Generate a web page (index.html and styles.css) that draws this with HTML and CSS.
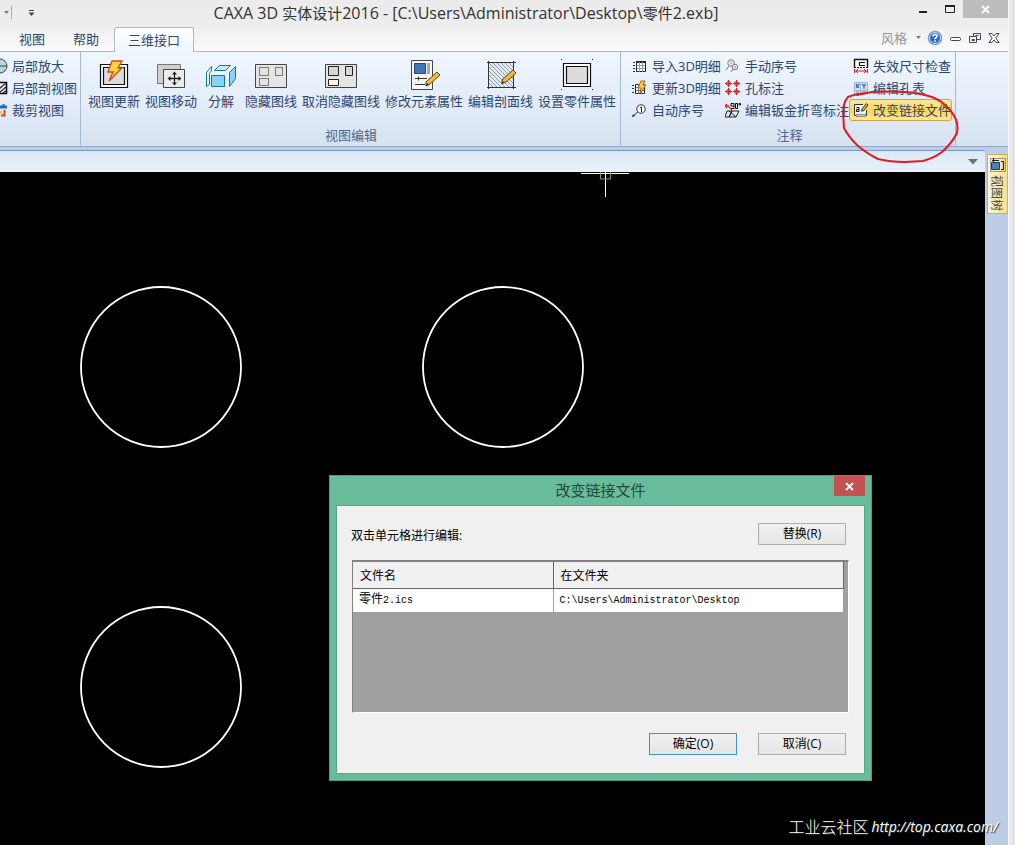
FILE: index.html
```html
<!DOCTYPE html>
<html lang="zh-CN">
<head>
<meta charset="utf-8">
<title>CAXA 3D 实体设计2016</title>
<link rel="stylesheet" href="styles.css">
</head>
<body>
<div class="frame">
<div class="app">
  <header class="titlebar">
    <div class="quick">
      <svg width="44" height="24" viewBox="0 0 44 24"><path d="M4 11h5l-2.500 3z" fill="#777"/><path d="M11.500 6v13" stroke="#aaa"/><path d="M29 10.500h5" stroke="#444"/><path d="M28.500 12.500h6l-3 3.500z" fill="#444"/></svg>
    </div>
    <h1 class="title">CAXA 3D <span class="zh">实体设计</span>2016 - [C:\Users\Administrator\Desktop\<span class="zh">零件</span>2.exb]</h1>
    <div class="winctl">
      <button class="wbtn" aria-label="最小化"><svg width="27" height="18"><path d="M10 12h8" stroke="#222" stroke-width="2"/></svg></button>
      <button class="wbtn" aria-label="最大化"><svg width="27" height="18"><path d="M9.500 5.500h9v7h-9z" fill="none" stroke="#222"/><path d="M9 6h10" stroke="#222" stroke-width="2"/></svg></button>
      <button class="wbtn wclose" aria-label="关闭"><svg width="45" height="18"><path d="M19 6l7 7M26 6l-7 7" stroke="#fff" stroke-width="1.800"/></svg></button>
    </div>
  </header>

  <nav class="tabs">
    <button class="tab">视图</button>
    <button class="tab">帮助</button>
    <button class="tab active">三维接口</button>
    <div class="tabtools">
      <button class="plain style">风格<svg width="7" height="6"><path d="M1 1h5l-2.500 3z" fill="#777"/></svg></button>
      <button class="plain" aria-label="帮助"><svg width="16" height="16"><circle cx="8" cy="8" r="6.800" fill="#2767c8" stroke="#7c9fd2"/><circle cx="8" cy="8" r="5.500" fill="none" stroke="#dce9fb"/><path d="M6 6.500q0-2 2-2t2 1.800q0 1-2 2.200v.8" fill="none" stroke="#fff" stroke-width="1.600"/><path d="M7.200 10.300h1.600v1.600H7.200z" fill="#fff"/></svg></button>
      <button class="plain" aria-label="最小化文档"><svg width="14" height="16"><rect x="1.500" y="7.500" width="10" height="3" rx="1" fill="#fff" stroke="#445"/></svg></button>
      <button class="plain" aria-label="还原文档"><svg width="14" height="16"><path d="M5.500 6V3.500h7v6H9M1.500 6.500h7v6h-7zM4 9.500h2.500v1H4zM7.500 5.500h3" fill="none" stroke="#445"/></svg></button>
      <button class="plain" aria-label="关闭文档"><svg width="14" height="16"><path d="M2 3.500h3l2 2.500 2-2.500h3L8.800 8l3.200 4.500H9L7 10l-2 2.500H2L5.200 8z" fill="#fff" stroke="#445"/></svg></button>
    </div>
  </nav>

  <section class="ribbon">
    <div class="group first">
      <div class="stack">
        <button class="row"><svg width="8" height="16"><circle cx="0" cy="8" r="7" fill="#b7d5e4" stroke="#444"/><path d="M0 8h7" stroke="#444"/></svg>局部放大</button>
        <button class="row"><svg width="8" height="16"><path d="M-1 2.500h7.500v11H-1z" fill="#f4f4ea" stroke="#000" stroke-width="1.500"/><path d="M-1 9l7-6M-1 13l7-6M3 13l4-3" stroke="#225" stroke-width="1.200"/></svg>局部剖视图</button>
        <button class="row"><svg width="8" height="16"><path d="M0 5h7" stroke="#246bb5" stroke-width="3"/><path d="M3.500 2v4" stroke="#246bb5" stroke-width="2"/><path d="M1 13.500h3.500V8" fill="none" stroke="#e0421c" stroke-width="2"/><path d="M0 9h2v3H0z" fill="#f9c22e"/></svg>裁剪视图</button>
      </div>
    </div>

    <div class="group edit">
      <div class="bigs">
        <button class="big"><svg width="32" height="32"><path d="M2.500 6.500h27v23h-27z" fill="#fff" stroke="#111" stroke-width="1.200"/><path d="M5.500 9.500h21v17h-21z" fill="#dcdcdc" stroke="#111" stroke-width="1.200"/><path d="M14 3h10l-4 7h4L11 23l4-9h-5z" fill="#ffd83e" stroke="#d4491a" stroke-width="1.400"/></svg>视图更新</button>
        <button class="big"><svg width="32" height="32"><path d="M2.500 6.500h23v19h-23z" fill="#d0d0d0" stroke="#777"/><path d="M8.500 11.500h21v18h-21z" fill="#ececec" stroke="#444"/><path d="M14 20.500h11M19.500 15v11" stroke="#222" stroke-width="1.300"/><path d="M19.500 13.500l-2.500 3h5zM19.500 27.500l-2.500-3h5zM12.500 20.500l3-2.500v5zM26.500 20.500l-3-2.500v5z" fill="#222"/></svg>视图移动</button>
        <button class="big"><svg width="32" height="32"><g stroke="#1673a5" stroke-linejoin="round"><path d="M14.500 7.500h11l-5 5h-11z" fill="#c6eafb"/><path d="M1.500 14.500l5-6v4l-2 3v11l-3 2z" fill="#e6f8ff"/><path d="M24.500 14.500l6-6v12l-6 8z" fill="#8fd4f4"/><path d="M6.500 17.500h13v11h-13z" fill="#86d2f5"/></g></svg>分解</button>
        <button class="big"><svg width="32" height="32"><path d="M.5 6.500h31v23H.5z" fill="#e4e4e4" stroke="#444"/><path d="M4.500 9.500h9v8h-9zM20.500 9.500h7v8h-7zM4.500 20.500h9v7h-9z" fill="none" stroke="#111" stroke-dasharray="1 1"/></svg>隐藏图线</button>
        <button class="big"><svg width="32" height="32"><path d="M.5 6.500h31v23H.5z" fill="#e4e4e4" stroke="#444"/><path d="M3.500 8.500h10v9h-10zM20.500 8.500h7v9h-7z" fill="#d6d6d6" stroke="#222"/><path d="M3.500 21.500h10v6h-10z" fill="#fff8dc" stroke="#222"/></svg>取消隐藏图线</button>
        <button class="big"><svg width="32" height="32"><path d="M3.500 2.500h21v29h-21z" fill="#f7f7f7" stroke="#444"/><path d="M6.500 5.500h11v10h-11z" fill="#3f74b5" stroke="#244b7c"/><path d="M20.500 5v11" stroke="#aaa" stroke-width="3"/><path d="M7 20.500h12M7 26.500h10M10.500 18.500v4" stroke="#333"/><path d="M18 24l11-10 3 3-10 9-4 2z" fill="#f5b933" stroke="#5f431c"/><path d="M18 28l1-3 2 2z" fill="#222"/></svg>修改元素属性</button>
        <button class="big"><svg width="32" height="32"><path d="M4 5h24v24H4z" fill="#e6ebf0"/><path d="M4 25l4 4M4 21l8 8M4 17l12 12M4 13l16 16M4 9l20 20M4 5l24 24M8 5l20 20M12 5l16 16M16 5l12 12M20 5l8 8M24 5l4 4" stroke="#8d98a3"/><path d="M2 4.500h29M2 29.500h29M3.500 3v28M28.500 3v28" stroke="#333"/><path d="M17 22l11-10 3 3-10 9-4 1z" fill="#f5b933" stroke="#5f431c"/><path d="M16.500 26l1-3 2 2z" fill="#222"/></svg>编辑剖面线</button>
        <button class="big"><svg width="32" height="32"><path d="M2.500 5.500h27v23h-27z" fill="#fff" stroke="#111" stroke-width="1.200"/><path d="M5.500 8.500h21v17h-21z" fill="#dcdcdc" stroke="#111" stroke-width="1.200"/><path d="M0 1h1v1H0zM31 1h1v1h-1zM0 31h1v1H0zM31 31h1v1h-1z" fill="#111"/></svg>设置零件属性</button>
      </div>
      <div class="caption">视图编辑</div>
    </div>

    <div class="group notes">
      <div class="cols">
        <div class="stack">
          <button class="row"><svg width="16" height="16"><path d="M4.500 3.500h9v10h-9z" fill="#fff" stroke="#222"/><path d="M4 4h10" stroke="#222" stroke-width="2"/><path d="M5 7.500h8M5 10.500h8M7.500 4v10M10.500 4v10" stroke="#999"/><path d="M1 4.500h2M1 7.500h2M1 10.500h2M1 13.500h2" stroke="#333"/></svg>导入3D明细</button>
          <button class="row"><svg width="16" height="16"><path d="M3.500 4.500h9v9h-9z" fill="#fff" stroke="#222"/><path d="M4 7.500h8M4 10.500h8M6.500 4v10M9.500 4v10" stroke="#777"/><path d="M0 5.500h2M0 8.500h2M0 12.500h2" stroke="#333"/><path d="M9 1h4l-2 4h3l-6 8 1-5H6z" fill="#ffd03a" stroke="#ad6416"/></svg>更新3D明细</button>
          <button class="row"><svg width="16" height="16"><circle cx="9" cy="7" r="4.200" fill="#fff" stroke="#333"/><path d="M8 6l1.500-1v5M5.500 10L1 14.500" fill="none" stroke="#222"/><path d="M0 15l1-3 2 2z" fill="#222"/></svg>自动序号</button>
        </div>
        <div class="stack">
          <button class="row"><svg width="16" height="16"><circle cx="6" cy="5" r="3.200" fill="#fff" stroke="#777"/><circle cx="10" cy="9" r="2.800" fill="#eee" stroke="#777"/><path d="M4 8l-3 4M6 3.500v3M10 8v2M8 11l-2 3" fill="none" stroke="#777"/></svg>手动序号</button>
          <button class="row"><svg width="16" height="16"><g fill="#fff" stroke="#c72323"><circle cx="3.500" cy="3.500" r="2"/><circle cx="11.500" cy="3.500" r="2"/><circle cx="3.500" cy="11.500" r="2"/><circle cx="11.500" cy="11.500" r="2"/><path d="M0 3.500h7M8 3.500h7M0 11.500h7M8 11.500h7M3.500 0v7M11.500 0v7M3.500 8v7M11.500 8v7"/></g></svg>孔标注</button>
          <button class="row"><svg width="16" height="16"><path d="M2 9h5l-3 6H0zM7 9h7l-3 6H4zM4 9l7 6" fill="none" stroke="#222"/><path d="M0 4h4M2 2L0 4l2 2M3 4q3 2 4 5" fill="none" stroke="#d62a1e" stroke-width="1.300"/><path d="M6 1.500h3v5H6M6 1.500v2.500h3M10.500 1.500h2v5h-2zM14 1.500h1.500V3H14z" fill="none" stroke="#111"/></svg>编辑钣金折弯标注</button>
        </div>
        <div class="stack">
          <button class="row"><svg width="16" height="16"><path d="M1.500 9.500v-8h13v8" fill="#fff" stroke="#111" stroke-width="1.400"/><path d="M12 4.500H6.500v3H12" fill="none" stroke="#111" stroke-width="1.200"/><path d="M1 9.500h14" stroke="#111" stroke-dasharray="2 1"/><path d="M1.500 11v4M14.500 11v4M2 13h12M5 11l-2 2 2 2M11 11l2 2-2 2" fill="none" stroke="#d3201b"/></svg>失效尺寸检查</button>
          <button class="row"><svg width="16" height="16"><path d="M1.500 2.500h13v11h-13z" fill="#dbeaf7" stroke="#9fb2c7"/><path d="M3 4l3 4M6 4L3 8M9 4l2 2 2-2M11 6v3" fill="none" stroke="#2c6fb4" stroke-width="1.300"/><path d="M2 10.500h12M7.500 3v10" stroke="#9fb2c7"/><path d="M3 12h3M9 12h4" stroke="#888"/></svg>编辑孔表</button>
          <button class="row hot"><svg width="16" height="16"><path d="M10 2.500H1.500v11h12V8" fill="#eef1f4" stroke="#333"/><path d="M3.500 5.500h2.500v4H3.500v-2H6M8 9h1" fill="none" stroke="#111"/><path d="M9 7l4.500-5.500 1.500 1.500L11 8.500l-2 .5z" fill="#e8b33c" stroke="#333"/><path d="M3.500 12.500h9v2h-9z" fill="#ccc" stroke="#888"/></svg>改变链接文件</button>
        </div>
      </div>
      <div class="caption">注释</div>
    </div>
    <svg class="mark" width="122" height="78" viewBox="840 88 122 78"><path d="M866 93Q855 94 848 97Q843 103 843 112L844 128Q848 136 857 145Q866 153 878 159Q890 162 905 162L923 161Q934 158 942 152Q952 143 957 133Q958 128 957 123Q955 115 948 108Q942 101 932 97Q920 93 905 92Q888 91 872 92L857 95" fill="none" stroke="#dc1c22" stroke-width="2" stroke-linecap="round"/></svg>
  </section>

  <main class="work">
    <div class="docs">
      <div class="pathbar"><button class="plain" aria-label="展开"><svg width="10" height="6"><path d="M0 0h10L5 5.500z" fill="#707070"/></svg></button></div>
      <div class="canvas">
        <svg class="drawing" width="985" height="673" viewBox="0 172 985 673">
          <g fill="none" stroke="#fff" stroke-width="1.800"><circle cx="161" cy="367" r="80"/><circle cx="503" cy="367" r="80"/><circle cx="161" cy="687" r="80"/></g>
          <path d="M581 173.500h48M605.500 172v25" stroke="#fff"/>
          <path d="M600.500 172v7h10v-7" fill="none" stroke="#5fa878"/>
        </svg>

        <div class="dialog" role="dialog" aria-labelledby="dlg">
          <div class="dhead"><h2 id="dlg">改变链接文件</h2>
            <button class="dclose" aria-label="关闭"><svg width="9" height="9"><path d="M1 1l7 7M8 1L1 8" stroke="#fff" stroke-width="1.800"/></svg></button></div>
          <div class="dbody">
            <div class="dtop"><span>双击单元格进行编辑:</span><button class="btn">替换(R)</button></div>
            <div class="listbox">
              <table>
                <thead><tr><th>文件名</th><th>在文件夹</th></tr></thead>
                <tbody><tr><td><span class="han">零件</span>2.ics</td><td>C:\Users\Administrator\Desktop</td></tr></tbody>
              </table>
            </div>
            <div class="dfoot"><button class="btn primary">确定(O)</button><button class="btn">取消(C)</button></div>
          </div>
        </div>
      </div>
    </div>
    <aside class="side">
      <button class="vtab"><svg width="16" height="16"><path d="M.5 1.500h15v13H.5z" fill="none" stroke="#444" stroke-dasharray="1 1"/><path d="M1.500 5.500h8v7h-8z" fill="#4583b8" stroke="#1d405f"/><path d="M2 3.500h7M3.500 1v4M11 4.500h2.500v8H11" fill="none" stroke="#222" stroke-width="1.200"/></svg><span>视图树</span></button>
    </aside>
  </main>
</div>
<div class="edge"></div>
<div class="watermark"><span class="club">工业云社区</span> <a href="#">http://top.caxa.com/</a></div>
</div>
</body>
</html>
```
FILE: styles.css
```css
* { box-sizing: border-box; }
body {
  margin: 0;
  font: 13px/20px "Open Sans", "Noto Sans CJK SC", sans-serif;
  color: #2c466e;
}
button {
  font: inherit;
  color: inherit;
  background: none;
  border: 0;
  padding: 0;
  margin: 0;
}
svg { display: block; flex: none; }
h1, h2 { margin: 0; font-weight: 400; }

.frame { position: relative; display: flex; min-height: 100vh; overflow: hidden; }
.app { flex: 1; min-width: 0; display: flex; flex-direction: column; background: linear-gradient(#ebebeb, #ededed 24px, #fbfbfb 51px); }
.edge { width: 7px; background: #e9e9e9; border-left: 1px solid #f6f6f6; border-right: 3px solid #e2e2e2; }

.titlebar { display: flex; height: 27px; }
.quick { width: 44px; }
.title { flex: 1; font-size: 16px; line-height: 27px; text-align: center; color: #333; white-space: nowrap; }
.zh { font-size: 15px; }
.winctl { display: flex; width: 120px; justify-content: flex-end; align-items: flex-start; }
.wclose { background: #bcbcbc; }

.tabs { display: flex; height: 25px; border-bottom: 1px solid #a9b9cd; padding-left: 5px; align-items: stretch; }
.tab { padding: 0 14px; line-height: 23px; }
.tab.active {
  margin: 0 0 -1px 1px;
  padding: 0 13px;
  border: 1px solid #a9b9cd;
  border-bottom: 0;
  border-radius: 3px 3px 0 0;
  background: linear-gradient(#fff, #eff6fd);
}
.tabtools { margin-left: auto; display: flex; align-items: center; gap: 5px; padding: 0 7px 2px 0; }
.style { display: flex; align-items: center; gap: 8px; color: #8f959e; }
.style + .plain { margin-right: 1px; }

.ribbon {
  position: relative;
  display: flex;
  height: 95px;
  background: linear-gradient(#eff6fd, #e3ecf8 55%, #d6e2f1);
  border-bottom: 1px solid #94a6c1;
  white-space: nowrap;
}
.group { display: flex; flex-direction: column; justify-content: space-between; padding: 3px 0 1px; border-right: 1px solid #a7b8cf; }
.first { width: 81px; }
.edit { width: 540px; padding-left: 5px; }
.notes { width: 335px; padding-left: 7px; }
.bigs { display: flex; gap: 1px; padding-top: 3px; }
.big { display: flex; flex-direction: column; align-items: center; gap: 1px; min-width: 42px; padding: 0 2px; }
.stack { display: flex; flex-direction: column; align-items: flex-start; }
.row { display: flex; align-items: center; gap: 4px; height: 22px; padding-left: 3px; border: 1px solid transparent; }
.first .row { padding-left: 0; border-width: 0; }
.cols { display: flex; }
.hot { border-color: #c9a54a; border-radius: 3px; background: linear-gradient(#fbe9a0, #fbd65c 50%, #fde98a); }
.notes .stack { margin-right: -1px; }
.caption { margin-right: 4px; text-align: center; color: #4c668e; }
.mark { position: absolute; left: 840px; top: 36px; z-index: 2; pointer-events: none; }

.work { flex: 1; display: flex; background: #bccde5; }
.docs { flex: 1; min-width: 0; display: flex; flex-direction: column; padding-top: 3px; }
.pathbar { display: flex; justify-content: flex-end; align-items: center; height: 22px; padding-right: 7px; border-top: 1px solid #7b98c4; background: linear-gradient(#dce8f6, #eaf2fb); }
.canvas { position: relative; flex: 1; background: #000; overflow: hidden; }
.drawing { position: absolute; left: 0; top: 0; }
.side { width: 23px; padding: 7px 0 0 2px; }
.vtab { display: flex; flex-direction: column; align-items: center; gap: 2px; width: 21px; padding: 2px 0; border: 1px solid #c2b36e; background: linear-gradient(90deg, #fdf6d8, #f7e08e); color: #444; font-size: 12px; line-height: 16px; }
.vtab span { writing-mode: vertical-rl; text-orientation: sideways; margin-right: 3px; }

.dialog {
  position: absolute;
  left: 329px;
  top: 303px;
  width: 543px;
  padding: 0 6px 6px;
  border: 1px solid #4c9f80;
  background: #68bb9b;
  color: #000;
  font-size: 12px;
}
.dhead { position: relative; }
.dhead h2 { font-size: 15px; line-height: 29px; text-align: center; color: #24493c; }
.dclose { position: absolute; right: 0; top: 0; display: flex; align-items: center; justify-content: center; width: 31px; height: 20px; background: #c75050; }
.dbody { background: #f0f0f0; border: 1px solid #57a688; padding: 17px 15px 18px 15px; }
.dtop { display: flex; justify-content: space-between; align-items: flex-start; padding-right: 3px; }
.dtop span { line-height: 26px; margin-left: -1px; }
.btn { width: 88px; height: 22px; border: 1px solid #acacac; background: linear-gradient(#f0f0f0, #e5e5e5); line-height: 20px; }
.primary { border-color: #3c94c4; }
.listbox { height: 153px; margin-top: 11px; border: 1px solid #828282; border-top-width: 2px; border-right-color: #fff; border-bottom-color: #fff; background: #a0a0a0; padding-right: 4px; }
table { width: 100%; border-collapse: collapse; table-layout: fixed; }
th { width: 200px; height: 26px; padding: 2px 7px 0; font-weight: 400; text-align: left; background: #f0f0f0; border-right: 1px solid #666; border-bottom: 1px solid #666; }
th + th { width: auto; }
td { height: 24px; padding: 1px 6px 0; background: #fff; border-right: 1px solid #a0a0a0; border-bottom: 1px solid #a0a0a0; font-family: "Liberation Mono", "Noto Sans CJK SC", monospace; font-size: 10px; }
.han { font-size: 12px; }
.dfoot { display: flex; justify-content: flex-end; gap: 21px; padding-right: 3px; margin-top: 20px; }

.watermark { position: absolute; right: 17px; bottom: 7px; display: flex; align-items: center; gap: 3px; color: #fff; text-shadow: 1px 1px 1px #333; white-space: nowrap; }
.club { font-size: 16px; font-weight: 300; }
.watermark a { color: inherit; text-decoration: none; font: italic 14px/22px "Open Sans", sans-serif; }
```
